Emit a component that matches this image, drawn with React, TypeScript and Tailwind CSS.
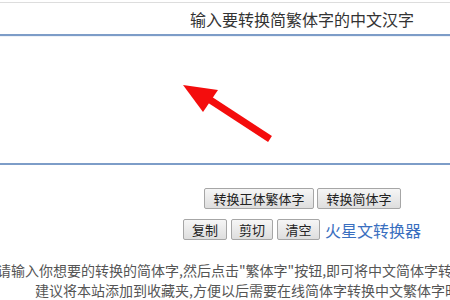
import React from "react";

const font = { fontFamily: '"Noto Sans CJK SC", "Liberation Sans", sans-serif' };

function OldButton({ label, className = "" }: { label: string; className?: string }) {
  return (
    <button
      type="button"
      className={`h-[21px] rounded-[2px] border border-[#a6a6a6] bg-gradient-to-b from-[#f6f6f6] to-[#dedede] text-[13px] leading-none text-[#222] ${className}`}
    >
      {label}
    </button>
  );
}

export default function App() {
  return (
    <div className="h-[300px] w-[450px] overflow-hidden bg-white" style={font}>
      <div className="h-[2px]" />
      <div className="h-px bg-[#dddddd]" />
      <div className="flex h-[31px] items-center pl-[190px] text-[16px] text-[#333]">
        输入要转换简繁体字的中文汉字
      </div>

      <div className="relative -mx-2 h-[131px] border-y-2 border-[#7d9dc8] bg-white">
        <div className="h-px bg-[#eef2f8]" />
        <svg
          className="absolute left-[188px] top-[43px]"
          width="100"
          height="70"
          viewBox="0 0 100 70"
        >
          <line x1="18" y1="13" x2="90" y2="60" stroke="#f40d0d" strokeWidth="7" strokeLinecap="butt" />
          <polygon points="3,6 38,11 23,33" fill="#f40d0d" />
        </svg>
      </div>

      <div className="mt-[23px] flex gap-[3px] pl-[204px]">
        <OldButton label="转换正体繁体字" className="w-[110px]" />
        <OldButton label="转换简体字" className="w-[84px]" />
      </div>

      <div className="mt-[10px] flex items-center gap-[4px] pl-[183px]">
        <OldButton label="复制" className="w-[44px]" />
        <OldButton label="剪切" className="w-[42px]" />
        <OldButton label="清空" className="w-[43px]" />
        <a className="ml-[1px] text-[16px] leading-none text-[#3a6fc0]">火星文转换器</a>
      </div>

      <div className="mt-[20px] whitespace-nowrap text-[14px] leading-[20px] text-[#555]">
        <div className="-ml-[3px]">
          请输入你想要的转换的简体字,然后点击"繁体字"按钮,即可将中文简体字转换为繁体字。
        </div>
        <div className="pl-[35px]">
          建议将本站添加到收藏夹,方便以后需要在线简体字转换中文繁体字时使用。
        </div>
      </div>
    </div>
  );
}
